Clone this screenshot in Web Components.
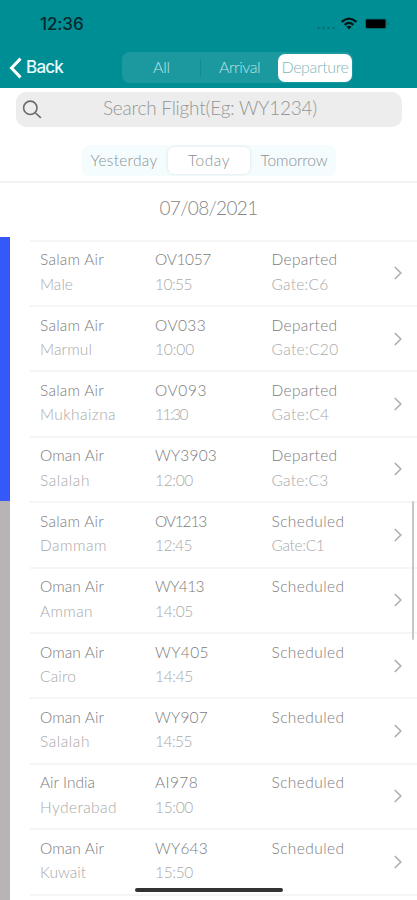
<!DOCTYPE html>
<html lang="en">
<head>
<meta charset="utf-8">
<title>Flights</title>
<style>
  body {
    margin: 0;
    width: 417px;
    height: 900px;
    overflow: hidden;
    background: #fff;
    font-family: Lato, "Noto Sans", sans-serif;
    font-weight: 300;
  }
</style>
</head>
<body>
<flight-app></flight-app>

<script>
// one line of text, tracked so that it takes up the given width
class FitText extends HTMLElement {
  constructor() {
    super();
    this.shadow = this.attachShadow({mode: 'open'});
  }

  connectedCallback() {
    this.shadow.innerHTML = `
      <style>
        :host { display: block; white-space: nowrap; }
        span { display: inline-block; }
      </style>
      <span><slot></slot></span>
    `;
    const span = this.shadow.querySelector("span");
    const count = this.textContent.length;
    const width = Number(this.getAttribute("width"));
    if (!width || !count) return;
    const spacing = (width - span.getBoundingClientRect().width) / count;
    span.style.letterSpacing = spacing.toFixed(3) + "px";
  }
}

class StatusBar extends HTMLElement {
  constructor() {
    super();
    this.shadow = this.attachShadow({mode: 'open'});
  }

  connectedCallback() {
    this.shadow.innerHTML = `
      <style>
        :host {
          display: flex;
          align-items: center;
          justify-content: space-between;
          box-sizing: border-box;
          height: 48px;
          padding: 0 26px 0 40px;
          color: #06292b;
          font: 500 17px/20px Inter, sans-serif;
        }
        svg { display: block; }
      </style>
      <fit-text width="43.5">12:36</fit-text>
      <svg width="76" height="18" viewBox="0 0 76 18">
        <g fill="#08666a">
          <circle cx="3.5" cy="13" r="1.1"/><circle cx="8.5" cy="13" r="1.1"/>
          <circle cx="13.5" cy="13" r="1.1"/><circle cx="18.5" cy="13" r="1.1"/>
        </g>
        <g fill="none" stroke="#041516" stroke-width="2.2">
          <path d="M26.6 6.8Q34 .4 41.4 6.8"/>
          <path d="M29.6 9.8Q34 6 38.4 9.8"/>
        </g>
        <path fill="#041516" d="M31.4 11.6Q34 9.8 36.6 11.6L34 14.4Z"/>
        <rect x="50" y="3.6" width="21.6" height="10.4" rx="2" fill="#056a70"/>
        <rect x="51" y="4.6" width="19.4" height="8.4" rx="1" fill="#000"/>
        <path d="M73 6.8q2 2 0 4z" fill="#066066"/>
      </svg>
    `;
  }
}

class NavBar extends HTMLElement {
  constructor() {
    super();
    this.shadow = this.attachShadow({mode: 'open'});
  }

  connectedCallback() {
    this.shadow.innerHTML = `
      <style>
        :host {
          display: flex;
          align-items: flex-start;
          box-sizing: border-box;
          height: 40px;
          padding: 4px 0 0 9px;
        }
        .back {
          display: flex;
          align-items: center;
          gap: 4px;
          width: 113px;
          height: 31px;
          color: #e8fbfb;
          font: 500 17px/20px Inter, sans-serif;
        }
        .back fit-text { margin-top: -1px; }
        .segments {
          display: flex;
          align-items: center;
          box-sizing: border-box;
          width: 231px;
          height: 31px;
          padding: 0 1px;
          border-radius: 8px;
          background: #1c999f;
          color: #b9e5e7;
          font-size: 16px;
          line-height: 27px;
        }
        .segment {
          display: flex;
          justify-content: center;
          width: 77px;
          height: 29px;
        }
        .divider { width: 1px; height: 16px; background: #118a91; }
        .active {
          width: 74px;
          height: 28px;
          line-height: 26px;
          border-radius: 7px;
          background: #fff;
          color: #84b7b9;
        }
      </style>
      <div class="back">
        <svg width="13" height="22" viewBox="0 0 13 22">
          <path d="M11.5 1.6L2.5 11l9 9.4" fill="none" stroke="#fff" stroke-width="3"/>
        </svg>
        <fit-text width="37">Back</fit-text>
      </div>
      <div class="segments">
        <div class="segment"><fit-text width="17">All</fit-text></div>
        <div class="divider"></div>
        <div class="segment"><fit-text width="41">Arrival</fit-text></div>
        <div class="segment active"><fit-text width="67">Departure</fit-text></div>
      </div>
    `;
  }
}

class SearchField extends HTMLElement {
  constructor() {
    super();
    this.shadow = this.attachShadow({mode: 'open'});
  }

  connectedCallback() {
    this.shadow.innerHTML = `
      <style>
        :host {
          display: flex;
          align-items: center;
          box-sizing: border-box;
          width: 386px;
          height: 35px;
          margin: 4px 0 0 16px;
          padding-left: 6px;
          border-radius: 10px;
          background: #ededed;
          color: #969696;
          font-size: 19px;
          line-height: 30px;
        }
        fit-text { margin: -4px 0 0 61px; }
      </style>
      <svg width="20" height="20" viewBox="0 0 20 20" fill="none" stroke="#6a6a6a" stroke-width="1.6">
        <circle cx="8.3" cy="7.8" r="6.7"/>
        <path d="M13 12.5l5.8 5.4"/>
      </svg>
      <fit-text width="214">${this.getAttribute("label")}</fit-text>
    `;
  }
}

class DayPicker extends HTMLElement {
  constructor() {
    super();
    this.shadow = this.attachShadow({mode: 'open'});
  }

  connectedCallback() {
    this.shadow.innerHTML = `
      <style>
        :host {
          display: block;
          box-sizing: border-box;
          height: 56px;
          padding: 18px 0 0 82px;
          border-bottom: 2px solid #f3f3f3;
        }
        .days {
          display: flex;
          align-items: center;
          width: 254px;
          height: 31px;
          border-radius: 8px;
          background: #f4fcfe;
          color: #8b9193;
          font-size: 15.5px;
          line-height: 27px;
        }
        .day { display: flex; justify-content: center; width: 84px; }
        .active {
          margin: 0 2px;
          width: 82px;
          height: 27px;
          border-radius: 6px;
          background: #fff;
          box-shadow: 0 0 3px rgba(0, 40, 50, 0.14);
        }
      </style>
      <div class="days">
        <div class="day"><fit-text width="67">Yesterday</fit-text></div>
        <div class="day active"><fit-text width="42">Today</fit-text></div>
        <div class="day"><fit-text width="67">Tomorrow</fit-text></div>
      </div>
    `;
  }
}

class FlightRow extends HTMLElement {
  constructor() {
    super();
    this.shadow = this.attachShadow({mode: 'open'});
  }

  set flight(cells) {
    const cell = ([text, width]) => `<fit-text width="${width}">${text}</fit-text>`;
    const column = (top, bottom) => `
      <div class="column">
        ${cell(top)}
        <div class="detail">${bottom ? cell(bottom) : ""}</div>
      </div>
    `;
    this.shadow.innerHTML = `
      <style>
        :host {
          display: flex;
          box-sizing: border-box;
          flex: none;
          height: 65.4px;
          padding: 5.6px 14px 0 10px;
          border-top: 2px solid #f5f5f5;
          color: #7c7c7c;
          font-size: 15.5px;
          line-height: 24.4px;
        }
        .column { width: 116.5px; }
        .column:first-of-type { width: 115px; }
        .detail { color: #a9a9a9; }
        svg { margin: 19px 0 0 auto; }
      </style>
      ${column(cells[0], cells[1])}
      ${column(cells[2], cells[3])}
      ${column(cells[4], cells[5])}
      <svg width="10" height="14" viewBox="0 0 10 14">
        <path d="M1.8 1l6 6-6 6" fill="none" stroke="#adadad" stroke-width="1.6"/>
      </svg>
    `;
  }
}

class FlightApp extends HTMLElement {
  constructor() {
    super();
    this.shadow = this.attachShadow({mode: 'open'});
  }

  connectedCallback() {
    this.shadow.innerHTML = `
      <style>
        :host {
          display: flex;
          flex-direction: column;
          position: relative;
          height: 900px;
          overflow: hidden;
        }
        header { height: 88px; background: #008e95; flex: none; }
        search-field, day-picker { flex: none; }
        .date {
          display: flex;
          justify-content: center;
          box-sizing: border-box;
          flex: none;
          height: 54px;
          padding-top: 10px;
          color: #868686;
          font-size: 19px;
          line-height: 30px;
        }
        .content { display: flex; flex: 1; min-height: 0; }
        .strip { display: flex; flex-direction: column; width: 10px; margin-right: 20px; }
        .blue { height: 264px; background: #3458fa; }
        .grey { flex: 1; background: #b8b4b5; }
        .list { display: flex; flex-direction: column; flex: 1; padding-top: 2.6px; overflow: hidden; }
        .scrollbar {
          position: absolute;
          left: 412px;
          top: 501px;
          width: 2px;
          height: 139px;
          border-radius: 1px;
          background: #c7c7c7;
        }
        .home {
          position: absolute;
          left: 135px;
          top: 888px;
          width: 148px;
          height: 4px;
          border-radius: 2px;
          background: #333;
        }
      </style>
      <header>
        <status-bar></status-bar>
        <nav-bar></nav-bar>
      </header>
      <search-field label="Search Flight(Eg: WY1234)"></search-field>
      <day-picker></day-picker>
      <div class="date"><fit-text width="98">07/08/2021</fit-text></div>
      <div class="content">
        <div class="strip"><div class="blue"></div><div class="grey"></div></div>
        <div class="list"></div>
      </div>
      <div class="scrollbar"></div>
      <div class="home"></div>
    `;

    const salam = ["Salam Air", 64];
    const oman = ["Oman Air", 64];
    const departed = ["Departed", 66];
    const scheduled = ["Scheduled", 73];
    const flights = [
      [salam, ["Male", 33], ["OV1057", 56], ["10:55", 37], departed, ["Gate:C6", 57]],
      [salam, ["Marmul", 52], ["OV033", 51], ["10:00", 39], departed, ["Gate:C20", 67]],
      [salam, ["Mukhaizna", 76], ["OV093", 52], ["11:30", 32], departed, ["Gate:C4", 58]],
      [oman, ["Salalah", 50], ["WY3903", 62], ["12:00", 38], departed, ["Gate:C3", 57]],
      [salam, ["Dammam", 67], ["OV1213", 51], ["12:45", 37], scheduled, ["Gate:C1", 53]],
      [oman, ["Amman", 53], ["WY413", 49], ["14:05", 38], scheduled],
      [oman, ["Cairo", 36], ["WY405", 54], ["14:45", 38], scheduled],
      [oman, ["Salalah", 50], ["WY907", 53], ["14:55", 37], scheduled],
      [["Air India", 55], ["Hyderabad", 77], ["AI978", 43], ["15:00", 38], scheduled],
      [oman, ["Kuwait", 46], ["WY643", 53], ["15:50", 38], scheduled]
    ];
    const list = this.shadow.querySelector(".list");
    flights.forEach((flight) => {
      const row = document.createElement("flight-row");
      row.flight = flight;
      list.appendChild(row);
    });
    // border of the row that runs off the screen
    const next = document.createElement("div");
    next.style.cssText = "flex: none; height: 2px; background: #f5f5f5";
    list.appendChild(next);
  }
}

window.customElements.define('fit-text', FitText);
window.customElements.define('status-bar', StatusBar);
window.customElements.define('nav-bar', NavBar);
window.customElements.define('search-field', SearchField);
window.customElements.define('day-picker', DayPicker);
window.customElements.define('flight-row', FlightRow);
window.customElements.define('flight-app', FlightApp);
</script>
</body>
</html>
